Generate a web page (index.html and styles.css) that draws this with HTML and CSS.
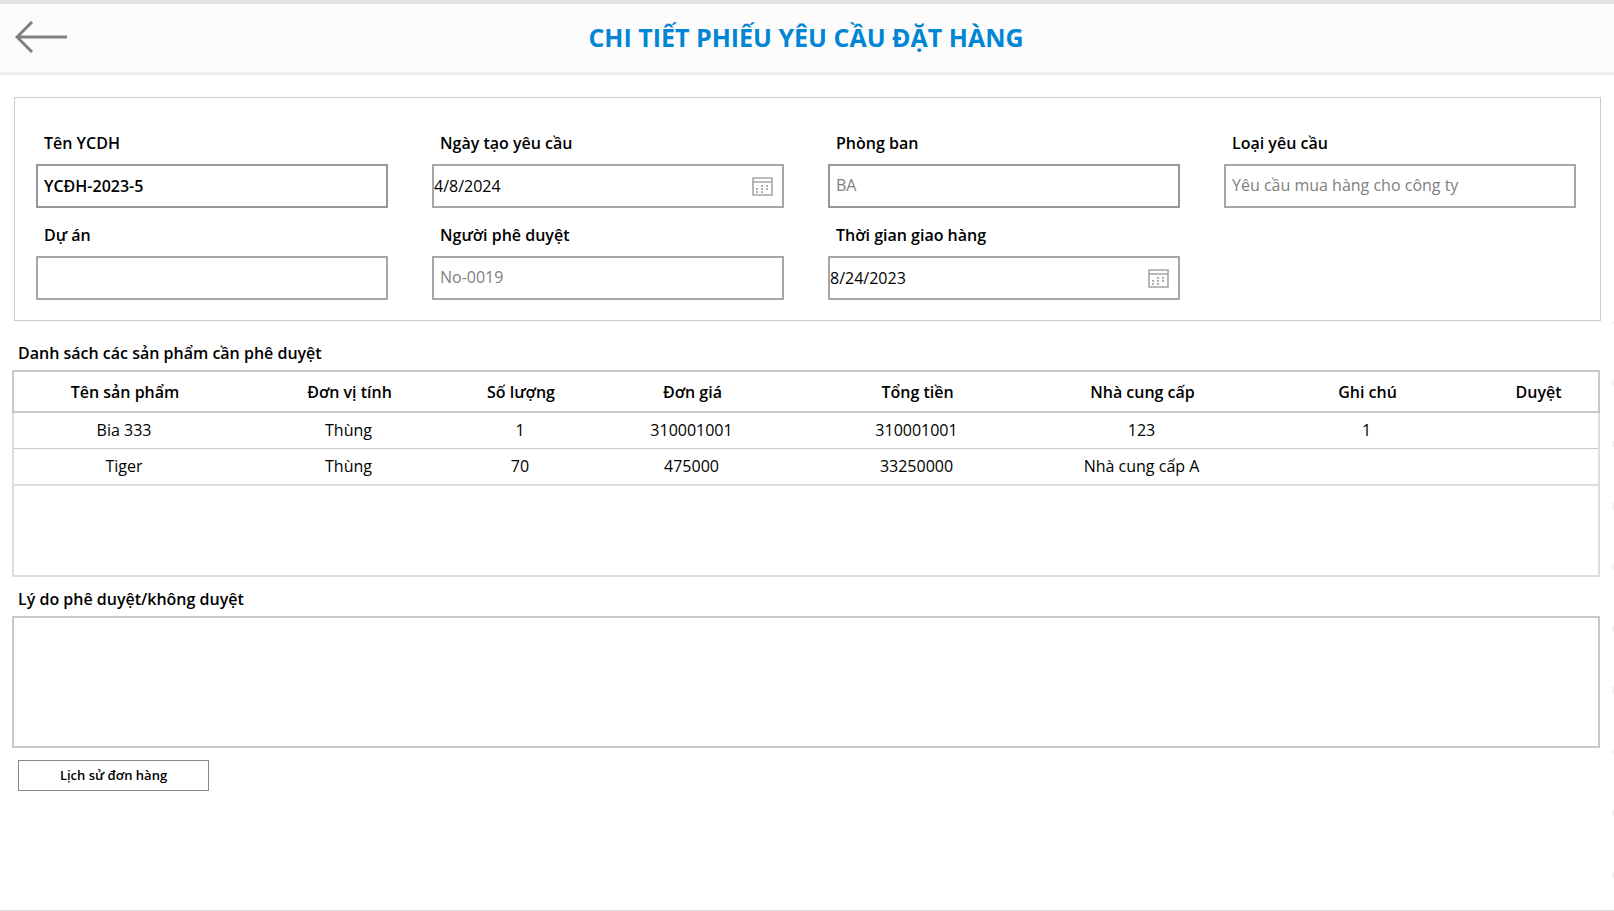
FILE: index.html
```
<!DOCTYPE html>
<html lang="vi">
<head>
    <meta charset="UTF-8">
    <meta name="viewport" content="width=device-width, initial-scale=1.0">
    <title>Chi tiết phiếu yêu cầu đặt hàng</title>
    <link rel="stylesheet" href="styles.css">
</head>
<body>
    <header class="header">
        <button class="back" type="button" aria-label="Quay lại">
            <svg width="52" height="32" viewBox="0 0 52 32" fill="none" stroke="#808080" stroke-width="3">
                <path d="M17 1 L2 16 L17 31 M2 16 H52"/>
            </svg>
        </button>
        <h1>CHI TIẾT PHIẾU YÊU CẦU ĐẶT HÀNG</h1>
    </header>

    <form class="info">
        <div class="form-group">
            <label for="name">Tên YCDH</label>
            <input class="field name" type="text" id="name" value="YCĐH-2023-5">
        </div>
        <div class="form-group">
            <label for="created">Ngày tạo yêu cầu</label>
            <div class="field date">
                <input type="text" id="created" value="4/8/2024">
                <svg width="21" height="20" viewBox="0 0 21 20">
                    <path d="M1 1h19v17H1z M1 5h19" fill="none" stroke="#a6a6a6" stroke-width="1.6"/>
                    <path d="M9 8h2v2H9z M14 8h2v2h-2z M4 11h2v2H4z M9 11h2v2H9z M14 11h2v2h-2z M4 14h2v2H4z M9 14h2v2H9z" fill="#b0b0b0"/>
                </svg>
            </div>
        </div>
        <div class="form-group">
            <label for="department">Phòng ban</label>
            <select class="field dark" id="department" disabled>
                <option>BA</option>
            </select>
        </div>
        <div class="form-group">
            <label for="type">Loại yêu cầu</label>
            <select class="field" id="type" disabled>
                <option>Yêu cầu mua hàng cho công ty</option>
            </select>
        </div>
        <div class="form-group">
            <label for="project">Dự án</label>
            <select class="field" id="project" disabled>
                <option></option>
            </select>
        </div>
        <div class="form-group">
            <label for="approver">Người phê duyệt</label>
            <select class="field" id="approver" disabled>
                <option>No-0019</option>
            </select>
        </div>
        <div class="form-group">
            <label for="delivery">Thời gian giao hàng</label>
            <div class="field date">
                <input type="text" id="delivery" value="8/24/2023">
                <svg width="21" height="20" viewBox="0 0 21 20">
                    <path d="M1 1h19v17H1z M1 5h19" fill="none" stroke="#a6a6a6" stroke-width="1.6"/>
                    <path d="M9 8h2v2H9z M14 8h2v2h-2z M4 11h2v2H4z M9 11h2v2H9z M14 11h2v2h-2z M4 14h2v2H4z M9 14h2v2H9z" fill="#b0b0b0"/>
                </svg>
            </div>
        </div>
    </form>

    <main class="details">
        <h2 class="title">Danh sách các sản phẩm cần phê duyệt</h2>
        <table class="products">
            <colgroup>
                <col><col><col class="short"><col><col><col><col><col class="short">
            </colgroup>
            <thead>
                <tr>
                    <th>Tên sản phẩm</th>
                    <th>Đơn vị tính</th>
                    <th>Số lượng</th>
                    <th>Đơn giá</th>
                    <th>Tổng tiền</th>
                    <th>Nhà cung cấp</th>
                    <th>Ghi chú</th>
                    <th>Duyệt</th>
                </tr>
            </thead>
            <tbody>
                <tr>
                    <td>Bia 333</td>
                    <td>Thùng</td>
                    <td>1</td>
                    <td>310001001</td>
                    <td>310001001</td>
                    <td>123</td>
                    <td>1</td>
                    <td></td>
                </tr>
                <tr>
                    <td>Tiger</td>
                    <td>Thùng</td>
                    <td>70</td>
                    <td>475000</td>
                    <td>33250000</td>
                    <td>Nhà cung cấp A</td>
                    <td></td>
                    <td></td>
                </tr>
            </tbody>
            <tfoot>
                <tr>
                    <td colspan="8"></td>
                </tr>
            </tfoot>
        </table>

        <label class="title" for="reason">Lý do phê duyệt/không duyệt</label>
        <textarea class="reason" id="reason"></textarea>
        <button class="history" type="button">Lịch sử đơn hàng</button>
    </main>
</body>
</html>
```
FILE: styles.css
```
* {
    box-sizing: border-box;
}

body {
    margin: 0;
    min-height: 100vh;
    display: flex;
    flex-direction: column;
    font-family: 'Open Sans', sans-serif;
    font-size: 16px;
    line-height: 24px;
    color: #000;
    background-color: #fff;
    border-bottom: 1px solid #ddd;
}

input, select, textarea, button {
    font: inherit;
    color: inherit;
}

/* Thanh tiêu đề */
.header {
    display: grid;
    grid-template-columns: 52px 1fr 52px;
    align-items: center;
    height: 75px;
    padding: 0 17px 2px 15px;
    background-color: #fcfcfc;
    border-top: 4px solid #e4e4e4;
    border-bottom: 3px solid #ececec;
}

.header h1 {
    margin: 0;
    font-size: 25px;
    line-height: 34px;
    font-weight: 700;
    text-align: center;
    color: #0086d5;
}

.back {
    padding: 0;
    border: none;
    background: none;
    cursor: pointer;
}

.back svg {
    display: block;
}

/* Thông tin phiếu */
.info {
    display: grid;
    grid-template-columns: repeat(4, 1fr);
    gap: 15px 44px;
    margin: 22px 13px 0 14px;
    padding: 33px 24px 20px 21px;
    border: 1px solid #ccc;
}

.form-group label {
    display: block;
    padding-left: 8px;
    margin-bottom: 9px;
    font-weight: 600;
}

.field {
    display: block;
    width: 100%;
    height: 44px;
    padding: 0 6px 2px;
    border: 2px solid #a6a6a6;
    border-radius: 0;
    background-color: #fff;
    appearance: none;
}

select.field:disabled {
    color: #808080;
    opacity: 1;
}

.field.name {
    padding-bottom: 0;
    font-weight: 600;
}

.field.name,
.field.dark {
    border-color: #969696;
}

.field.date {
    display: flex;
    align-items: center;
    padding: 0 9px 0 0;
}

.date input {
    flex: 1;
    min-width: 0;
    padding: 0;
    border: none;
    background: none;
}

.date svg {
    margin-top: 2px;
}

/* Danh sách sản phẩm, mép phải có vạch chia mờ */
.details {
    flex: 1;
    padding: 20px 14px 20px 12px;
    background-image: linear-gradient(#f2f2f2 6px, transparent 6px, transparent 62px, #f2f2f2 62px, #f2f2f2 68px, transparent 68px);
    background-size: 2px 123px;
    background-position: right -3px;
    background-repeat: repeat-y;
}

.title {
    display: block;
    margin: 0;
    padding-left: 6px;
    font-size: 16px;
    font-weight: 600;
}

.products {
    width: 100%;
    margin: 5px 0 10px;
    table-layout: fixed;
    border-collapse: collapse;
    border: 2px solid #ddd;
}

.products .short {
    width: 118px;
}

.products thead tr {
    height: 41px;
    border: 2px solid #c8c8c8;
}

.products tbody tr {
    height: 37px;
    border-bottom: 2px solid #ddd;
}

.products tbody tr:first-child {
    height: 36px;
    border-bottom: 1px solid #ccc;
}

.products tfoot tr {
    height: 91px;
}

.products th,
.products td {
    padding: 0 2px 0 0;
    text-align: center;
}

.products td {
    padding-right: 4px;
}

.products th {
    font-weight: 600;
}

.reason {
    display: block;
    width: 100%;
    height: 132px;
    margin: 5px 0 12px;
    padding: 6px;
    border: 2px solid #c8c8c8;
    resize: none;
}

.history {
    width: 191px;
    height: 31px;
    margin-left: 6px;
    padding: 0 0 2px;
    border: 1px solid #888;
    background-color: #fff;
    font-size: 13px;
    line-height: 18px;
    font-weight: 600;
    cursor: pointer;
}
```
